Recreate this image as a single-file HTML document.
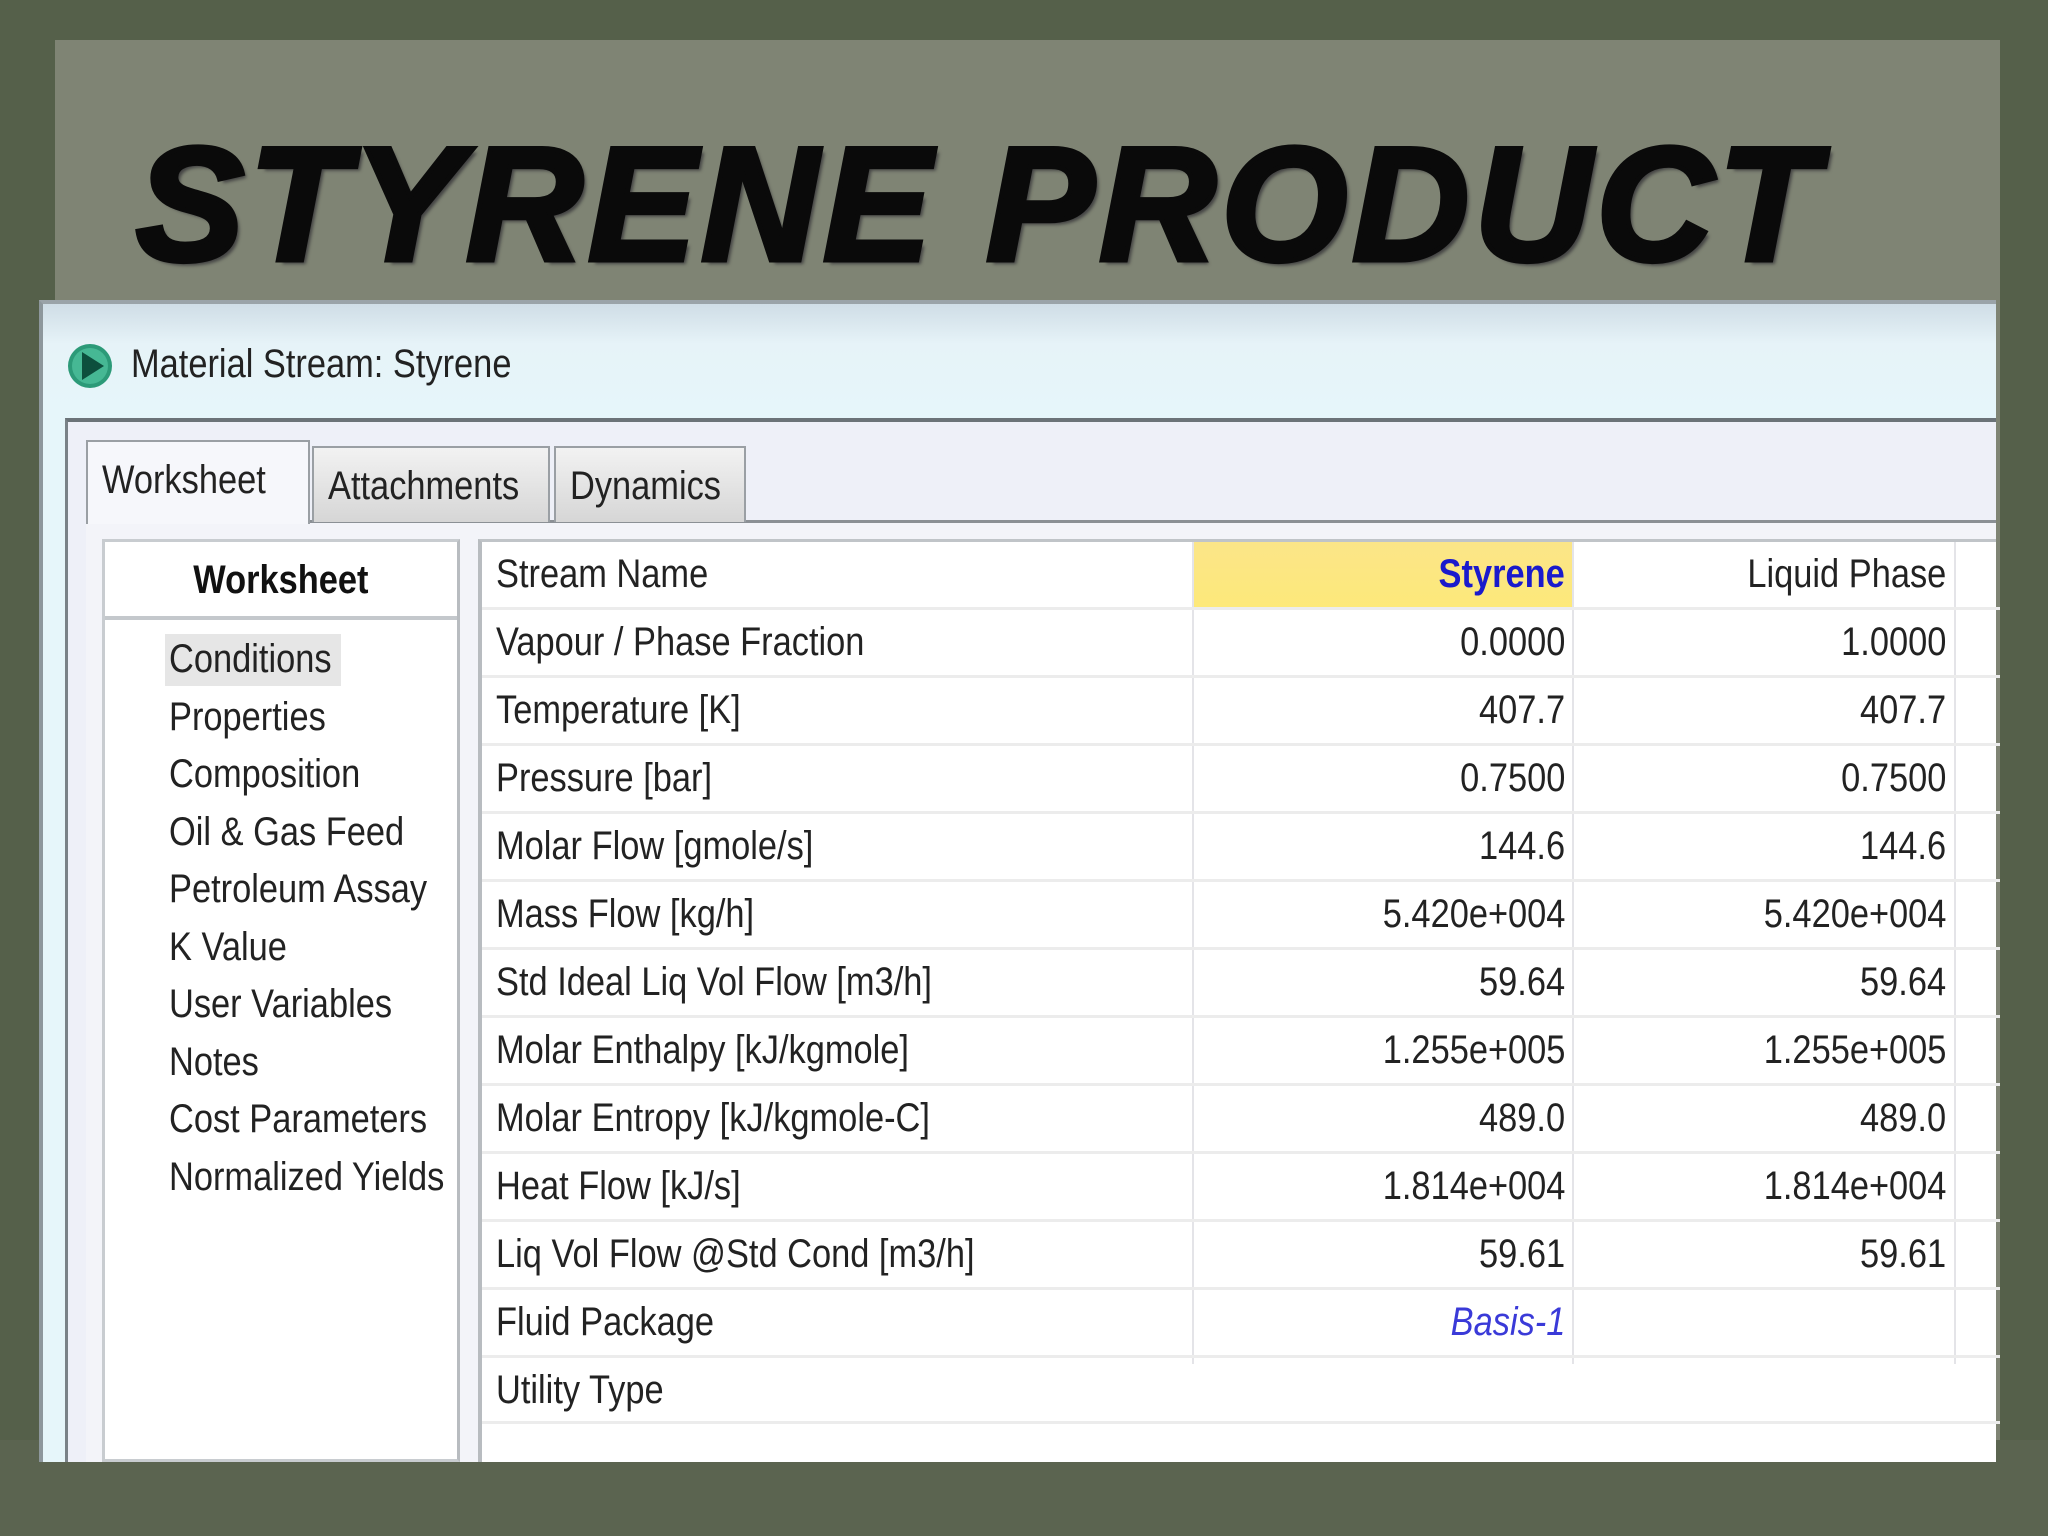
<!DOCTYPE html>
<html><head><meta charset="utf-8"><style>
*{margin:0;padding:0;box-sizing:border-box}
body{width:2048px;height:1536px;overflow:hidden;background:#55604a;position:relative;font-family:"Liberation Sans",sans-serif}
.paper{position:absolute;left:55px;top:40px;width:1945px;height:1440px;background:#7f8474}
.paper2{position:absolute;left:0;top:1440px;width:2048px;height:96px;background:#5b6450}
h1{position:absolute;left:136px;top:124px;font-family:"Liberation Sans",sans-serif;font-weight:bold;font-style:italic;font-size:162px;letter-spacing:5px;color:#0a0a0a;-webkit-text-stroke:5px #0a0a0a;text-shadow:4px 4px 3px #444;line-height:1}
.n{display:inline-block;white-space:nowrap;transform:scaleX(0.86);transform-origin:left center}
.nr{display:inline-block;white-space:nowrap;transform:scaleX(0.86);transform-origin:right center}
.win{position:absolute;left:39px;top:300px;width:1957px;height:1162px;background:linear-gradient(#cfdde6,#e6f3f8 40px,#e6f6fa 110px);border-top:4px solid #9aa3a8;border-left:4px solid #8d979c}
.ttl{position:absolute;left:131px;top:342px;font-size:40px;color:#222}
.ico{position:absolute;left:66px;top:338px}
.inner{position:absolute;left:65px;top:418px;width:1931px;height:1044px;background:#eef0f8;border-top:4px solid #6b7378;border-left:3px solid #7a8287}
.tab{position:absolute;top:446px;height:76px;border:2px solid #9a9fa4;border-bottom:none;background:linear-gradient(#f2f2f2,#d6d6d6);font-size:40px;color:#222;padding:16px 0 0 14px;overflow:hidden}
.sheet{position:absolute;left:86px;top:520px;width:1910px;height:942px;background:#f3f4f9;border-top:3px solid #8b9095}
.left{position:absolute;left:102px;top:539px;width:358px;height:923px;background:#fff;border:3px solid #c8ccd0;border-right:3px solid #b8bcc0}
.lh{position:absolute;left:0;top:0;width:100%;height:78px;border-bottom:4px solid #c4c8cc;text-align:center;font-weight:bold;font-size:40px;padding-top:16px;color:#111}
.li{position:absolute;left:64px;font-size:40px;color:#222;line-height:50px;white-space:nowrap}
.grid{position:absolute;left:478px;top:539px;width:1518px;height:923px;background:#fff;border-left:4px solid #b8bcc0;border-top:3px solid #c0c4c8}
.row{position:absolute;left:0;width:1518px;height:68px;border-bottom:3px solid #ececec;font-size:40px;color:#222}
.row>span{position:absolute;top:10px}
.l{left:14px}
.c1{right:435px}
.c2{right:54px}
.vl{position:absolute;top:0;width:2px;height:822px;background:#e4e4e8}
</style></head><body>
<div class="paper"></div><div class="paper2"></div>
<h1>STYRENE PRODUCT</h1>
<div class="win"></div>
<svg class="ico" width="48" height="56" viewBox="0 0 48 56"><circle cx="24" cy="28" r="22" fill="#2c9a78"/><circle cx="24" cy="28" r="18" fill="#46b894"/><path d="M16 14 L38 28 L16 42 Z" fill="#0d4f3d"/></svg>
<div class="ttl"><span class="n">Material Stream: Styrene</span></div>
<div class="inner"></div>
<div class="sheet"></div>
<div class="tab" style="left:86px;width:224px;top:440px;height:84px;background:#f6f7fb;z-index:2"><span class="n">Worksheet</span></div>
<div class="tab" style="left:312px;width:238px"><span class="n">Attachments</span></div>
<div class="tab" style="left:554px;width:192px"><span class="n">Dynamics</span></div>
<div class="left">
<div class="lh"><span class="n" style="transform-origin:center">Worksheet</span></div>
<div style="position:absolute;left:60px;top:92px;width:176px;height:52px;background:#e6e6e6"></div>
<div class="li" style="top:92px"><span class="n">Conditions</span></div>
<div class="li" style="top:150px"><span class="n">Properties</span></div>
<div class="li" style="top:207px"><span class="n">Composition</span></div>
<div class="li" style="top:265px"><span class="n">Oil &amp; Gas Feed</span></div>
<div class="li" style="top:322px"><span class="n">Petroleum Assay</span></div>
<div class="li" style="top:380px"><span class="n">K Value</span></div>
<div class="li" style="top:437px"><span class="n">User Variables</span></div>
<div class="li" style="top:495px"><span class="n">Notes</span></div>
<div class="li" style="top:552px"><span class="n">Cost Parameters</span></div>
<div class="li" style="top:610px"><span class="n">Normalized Yields</span></div>
</div>
<div class="grid">
<div style="position:absolute;left:712px;top:0;width:378px;height:66px;background:linear-gradient(#fbe588,#fde97a)"></div>
<div class="vl" style="left:710px"></div><div class="vl" style="left:1090px"></div><div class="vl" style="left:1472px"></div>
<div class="row" style="top:0"><span class="l"><span class="n">Stream Name</span></span><span class="c1"><span class="nr" style="color:#1a1acc;font-weight:bold">Styrene</span></span><span class="c2"><span class="nr">Liquid Phase</span></span></div>
<div class="row" style="top:68px"><span class="l"><span class="n">Vapour / Phase Fraction</span></span><span class="c1"><span class="nr">0.0000</span></span><span class="c2"><span class="nr">1.0000</span></span></div>
<div class="row" style="top:136px"><span class="l"><span class="n">Temperature [K]</span></span><span class="c1"><span class="nr">407.7</span></span><span class="c2"><span class="nr">407.7</span></span></div>
<div class="row" style="top:204px"><span class="l"><span class="n">Pressure [bar]</span></span><span class="c1"><span class="nr">0.7500</span></span><span class="c2"><span class="nr">0.7500</span></span></div>
<div class="row" style="top:272px"><span class="l"><span class="n">Molar Flow [gmole/s]</span></span><span class="c1"><span class="nr">144.6</span></span><span class="c2"><span class="nr">144.6</span></span></div>
<div class="row" style="top:340px"><span class="l"><span class="n">Mass Flow [kg/h]</span></span><span class="c1"><span class="nr">5.420e+004</span></span><span class="c2"><span class="nr">5.420e+004</span></span></div>
<div class="row" style="top:408px"><span class="l"><span class="n">Std Ideal Liq Vol Flow [m3/h]</span></span><span class="c1"><span class="nr">59.64</span></span><span class="c2"><span class="nr">59.64</span></span></div>
<div class="row" style="top:476px"><span class="l"><span class="n">Molar Enthalpy [kJ/kgmole]</span></span><span class="c1"><span class="nr">1.255e+005</span></span><span class="c2"><span class="nr">1.255e+005</span></span></div>
<div class="row" style="top:544px"><span class="l"><span class="n">Molar Entropy [kJ/kgmole-C]</span></span><span class="c1"><span class="nr">489.0</span></span><span class="c2"><span class="nr">489.0</span></span></div>
<div class="row" style="top:612px"><span class="l"><span class="n">Heat Flow [kJ/s]</span></span><span class="c1"><span class="nr">1.814e+004</span></span><span class="c2"><span class="nr">1.814e+004</span></span></div>
<div class="row" style="top:680px"><span class="l"><span class="n">Liq Vol Flow @Std Cond [m3/h]</span></span><span class="c1"><span class="nr">59.61</span></span><span class="c2"><span class="nr">59.61</span></span></div>
<div class="row" style="top:748px"><span class="l"><span class="n">Fluid Package</span></span><span class="c1"><span class="nr" style="color:#3a3ad8;font-style:italic">Basis-1</span></span></div>
<div class="row" style="top:816px;height:66px"><span class="l"><span class="n">Utility Type</span></span></div>
</div>
</body></html>
